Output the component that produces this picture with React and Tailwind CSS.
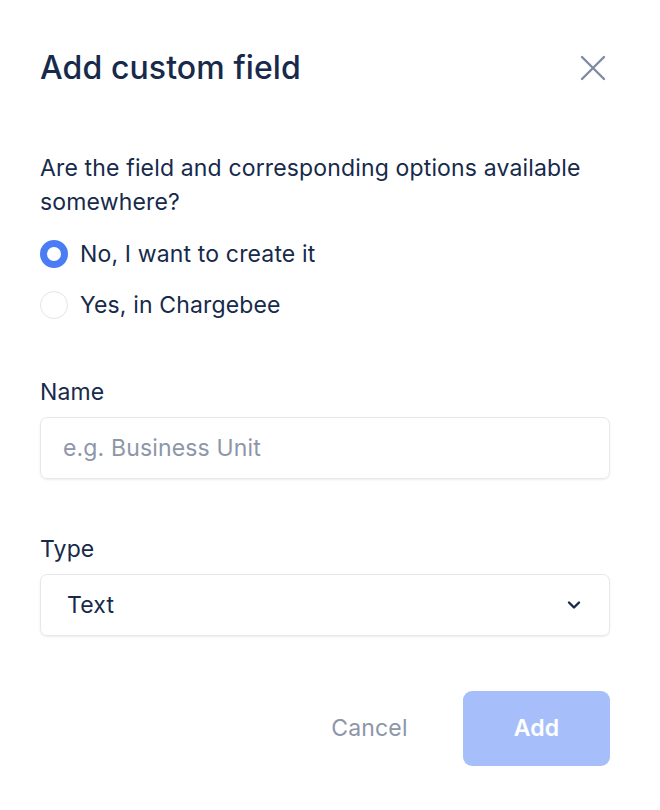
import React, { useState } from "react";

export default function App() {
  const [choice, setChoice] = useState("create");
  const [name, setName] = useState("");

  const options = [
    { id: "create", label: "No, I want to create it" },
    { id: "chargebee", label: "Yes, in Chargebee" },
  ];

  return (
    <div
      className="w-[660px] h-[810px] bg-white pl-[40px] pr-[50px] pt-[49px] text-[#172a4b] tracking-[0.15px] [font-optical-sizing:none] [font-variation-settings:'opsz'_14]"
      style={{ fontFamily: "Inter, 'Noto Sans', sans-serif" }}
    >
      <div className="flex items-center justify-between h-[38px]">
        <h1 className="text-[32px] leading-[38px] font-medium tracking-[0.1px]">
          Add custom field
        </h1>
        <button className="w-[30px] h-[30px] flex items-center justify-center mr-[2px]">
          <svg width="26" height="26" viewBox="0 0 26 26" fill="none">
            <path
              d="M2 2L24 24M24 2L2 24"
              stroke="#7f8ba2"
              strokeWidth="2.4"
              strokeLinecap="round"
            />
          </svg>
        </button>
      </div>

      <p className="mt-[64px] text-[23px] leading-[34px]">
        Are the field and corresponding options available somewhere?
      </p>

      <div className="mt-[18px] flex flex-col gap-[17px]">
        {options.map((o) => (
          <label
            key={o.id}
            className="flex items-center gap-[12px] h-[34px] cursor-pointer"
            onClick={() => setChoice(o.id)}
          >
            {choice === o.id ? (
              <span className="w-[28px] h-[28px] rounded-full border-[7px] border-[#4a7cf6] bg-white" />
            ) : (
              <span className="w-[28px] h-[28px] rounded-full border border-[#e3e5ea] bg-white" />
            )}
            <span className="text-[23px] leading-[34px]">{o.label}</span>
          </label>
        ))}
      </div>

      <div className="mt-[55px] text-[23px] leading-[30px]">Name</div>
      <input
        value={name}
        onChange={(e) => setName(e.target.value)}
        placeholder="e.g. Business Unit"
        className="mt-[10px] w-full h-[62px] rounded-[7px] border border-[#e6e8ec] shadow-[0_1px_2px_rgba(16,24,40,0.08)] pl-[22px] text-[23px] placeholder:text-[#8d96a9] outline-none"
      />

      <div className="mt-[55px] text-[23px] leading-[30px]">Type</div>
      <div className="mt-[10px] w-full h-[62px] rounded-[7px] border border-[#e6e8ec] shadow-[0_1px_2px_rgba(16,24,40,0.08)] pl-[26px] pr-[28px] flex items-center justify-between">
        <span className="text-[23px]">Text</span>
        <svg width="14" height="10" viewBox="0 0 14 10" fill="none">
          <path
            d="M2 2.5L7 7.5L12 2.5"
            stroke="#172a4b"
            strokeWidth="2.4"
            strokeLinecap="round"
            strokeLinejoin="round"
          />
        </svg>
      </div>

      <div className="mt-[55px] flex justify-end gap-[20px]">
        <button className="w-[147px] h-[75px] text-[23px] text-[#8d96a9]">
          Cancel
        </button>
        <button className="w-[147px] h-[75px] rounded-[9px] bg-[#a6bffa] text-white text-[23px] font-semibold">
          Add
        </button>
      </div>
    </div>
  );
}
